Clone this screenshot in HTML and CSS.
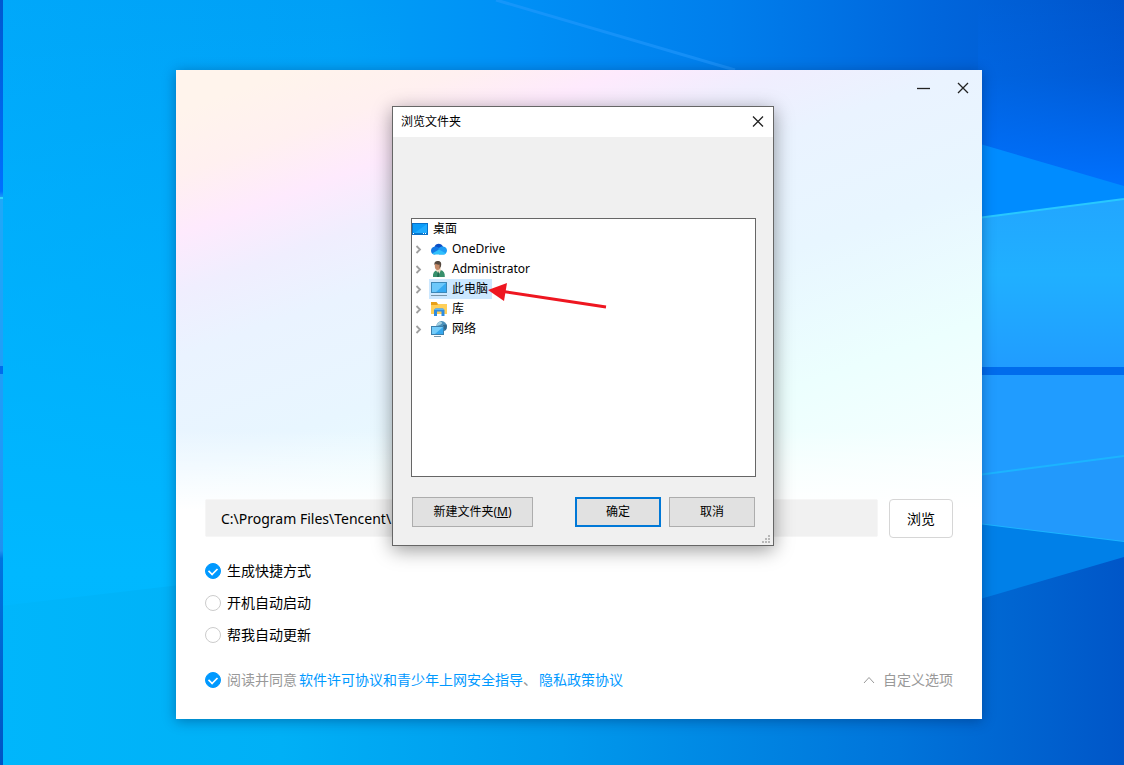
FILE: index.html
```html
<!DOCTYPE html>
<html lang="zh-CN">
<head>
    <meta charset="UTF-8">
    <title>安装向导</title>
    <link rel="stylesheet" href="styles.css">
</head>
<body>

<div class="desktop">
    <svg class="wallpaper" viewBox="0 0 1124 765" preserveAspectRatio="none" aria-hidden="true">
        <defs>
            <linearGradient id="sky" x1="0" y1="0" x2="1" y2="0">
                <stop offset="0" stop-color="#00a8fa"/>
                <stop offset="0.3" stop-color="#009ff6"/>
                <stop offset="0.46" stop-color="#0090f6"/>
                <stop offset="0.65" stop-color="#007eec"/>
                <stop offset="0.83" stop-color="#0066dc"/>
                <stop offset="1" stop-color="#0054cc"/>
            </linearGradient>
            <linearGradient id="glow" x1="0" y1="0" x2="0" y2="1">
                <stop offset="0" stop-color="#00b8ff" stop-opacity="0"/>
                <stop offset="0.75" stop-color="#00b8ff"/>
                <stop offset="1" stop-color="#00b4fa"/>
            </linearGradient>
            <linearGradient id="floor" x1="0" y1="0" x2="1" y2="0">
                <stop offset="0" stop-color="#00b6fb"/>
                <stop offset="0.25" stop-color="#00b0f6"/>
                <stop offset="0.5" stop-color="#0099ec"/>
                <stop offset="0.8" stop-color="#0074da"/>
                <stop offset="1" stop-color="#0056c8"/>
            </linearGradient>
            <linearGradient id="night" x1="0" y1="0" x2="0" y2="1">
                <stop offset="0" stop-color="#0070ff" stop-opacity="0"/>
                <stop offset="0.4" stop-color="#0070ff" stop-opacity="0.2"/>
                <stop offset="1" stop-color="#0072ff"/>
            </linearGradient>
            <linearGradient id="pane" x1="0" y1="0" x2="0" y2="1">
                <stop offset="0" stop-color="#22a6ff"/>
                <stop offset="0.45" stop-color="#20b0ff"/>
                <stop offset="1" stop-color="#209cff"/>
            </linearGradient>
            <linearGradient id="edge" x1="0" y1="0" x2="0" y2="1">
                <stop offset="0" stop-color="#0058d0"/>
                <stop offset="0.25" stop-color="#0070ff"/>
                <stop offset="0.26" stop-color="#20a8f8"/>
                <stop offset="0.6" stop-color="#2098f8"/>
                <stop offset="0.72" stop-color="#2090f0"/>
                <stop offset="0.73" stop-color="#0074e0"/>
                <stop offset="1" stop-color="#0054c4"/>
            </linearGradient>
        </defs>
        <rect width="1124" height="765" fill="url(#sky)"/>
        <rect width="400" height="765" fill="url(#glow)"/>
        <path d="M0 606L240 578L982 560H1124V765H0Z" fill="url(#floor)"/>
        <path d="M200 0H400V70H200Z" fill="url(#sky)" opacity="0"/>
        <rect x="978" width="146" height="190" fill="url(#night)"/>
        <path d="M496 0L735 70" stroke="#2a9cff" stroke-width="3" opacity="0.5"/>
        <path d="M970 141L1124 186V199L970 219Z" fill="#008cff"/>
        <path d="M970 219L1124 199V367H970Z" fill="url(#pane)"/>
        <path d="M970 219L1124 199" stroke="#28c8ff" stroke-width="2"/>
        <path d="M970 367H1124V375H970Z" fill="#006cec"/>
        <path d="M970 375H1124V456L970 476Z" fill="#209cff"/>
        <path d="M970 476L1124 456V542L970 523Z" fill="#2299fc"/>
        <path d="M970 476L1124 456M970 523L1124 542" stroke="#1cb4ff" stroke-width="2"/>
        <path d="M970 523L1124 542V557L970 602Z" fill="#0080e8"/>
        <rect width="3" height="765" fill="url(#edge)"/>
        <path d="M0 198H3" stroke="#30d4ff" stroke-width="2"/>
        <path d="M0 370H3" stroke="#006cec" stroke-width="8"/>
    </svg>

    <main class="installer">
        <header class="installer-bar">
            <button class="win-btn" type="button" aria-label="最小化">
                <svg width="14" height="14" viewBox="0 0 14 14"><path d="M1 7.5H14"/></svg>
            </button>
            <button class="win-btn" type="button" aria-label="关闭">
                <svg width="14" height="14" viewBox="0 0 14 14"><path d="M2 2L12 12M12 2L2 12"/></svg>
            </button>
        </header>

        <form class="setup">
            <div class="path-row">
                <input class="path-input" type="text" value="C:\Program Files\Tencent\" aria-label="安装路径">
                <button class="browse-btn" type="button">浏览</button>
            </div>

            <div class="options">
                <label class="option"><input type="checkbox" checked>生成快捷方式</label>
                <label class="option"><input type="checkbox">开机自动启动</label>
                <label class="option"><input type="checkbox">帮我自动更新</label>
            </div>

            <div class="footer">
                <div class="agreement">
                    <label class="option muted"><input type="checkbox" checked>阅读并同意</label>
                    <a href="#">软件许可协议和青少年上网安全指导</a><span class="comma">、</span>
                    <a href="#">隐私政策协议</a>
                </div>
                <button class="custom-btn" type="button">
                    <svg width="12" height="8" viewBox="0 0 12 8"><path d="M1 7L6 1.5L11 7"/></svg>
                    自定义选项
                </button>
            </div>
        </form>
    </main>

    <section class="dialog" role="dialog" aria-labelledby="dialogTitle">
        <header class="dialog-bar">
            <h1 id="dialogTitle">浏览文件夹</h1>
            <button class="dialog-close" type="button" aria-label="关闭">
                <svg width="12" height="12" viewBox="0 0 12 12"><path d="M1 0.5L11 10.5M11 0.5L1 10.5"/></svg>
            </button>
        </header>

        <div class="dialog-body">
            <div class="tree">
                <div class="node root">
                    <svg class="icon" width="16" height="16" viewBox="0 0 16 16">
                        <rect x="0.5" y="2.5" width="15" height="11" fill="#0c9cf8" stroke="#0870c8"/>
                        <path d="M1 13L15 3V13Z" fill="#20acff"/>
                        <path d="M1 12.5H15" stroke="#0a78cc"/>
                        <path d="M1 12.5H2M11 12.5H12M13 12.5H14" stroke="#fff"/>
                    </svg>
                    <span class="name">桌面</span>
                </div>
                <ul>
                    <li class="node">
                        <button class="expand" type="button" aria-label="展开"><svg width="7" height="9" viewBox="0 0 7 9"><path d="M1.5 1L5 4.5L1.5 8"/></svg></button>
                        <span class="item">
                            <svg class="icon" width="16" height="16" viewBox="0 0 16 16">
                                <path d="M4 9C2.6 5.5 4.6 2.7 7.6 2.7C9.6 2.7 11.2 3.8 12 5.6L9 10Z" fill="#0c4fc4"/>
                                <path d="M3.2 5.8C5.4 5.2 7 6 8.5 7.5L10 9L4 13.5H3.5C1.5 13.5 0 12 0 9.8C0 7.6 1.4 6.1 3.2 5.8Z" fill="#1478e4"/>
                                <path d="M7.5 7.5C9 5.6 11 5.2 12.2 5.5C14.5 5.8 16 7.5 16 9.6C16 12 14.3 13.5 12.3 13.5H8Z" fill="#1e9cf4"/>
                                <path d="M1.2 12.6L8 8.6L15 12.4C14.3 13.2 13.4 13.5 12.3 13.5H3.5C2.6 13.5 1.8 13.2 1.2 12.6Z" fill="#30c0fc"/>
                            </svg>
                            <span class="name">OneDrive</span>
                        </span>
                    </li>
                    <li class="node">
                        <button class="expand" type="button" aria-label="展开"><svg width="7" height="9" viewBox="0 0 7 9"><path d="M1.5 1L5 4.5L1.5 8"/></svg></button>
                        <span class="item">
                            <svg class="icon" width="16" height="16" viewBox="0 0 16 16">
                                <path d="M2 16C1.6 12.2 3 9.8 6 9.2L9.5 9C12.6 9.8 14 12 13.8 16Z" fill="#37906c"/>
                                <path d="M4.8 9.5L8.2 13L9.8 9.2V7H5.5Z" fill="#f0ddc8"/>
                                <path d="M7 10L8.2 12.6L8 16H6Z" fill="#226b50"/>
                                <ellipse cx="6.6" cy="5" rx="2.8" ry="3.9" fill="#c48a68"/>
                                <path d="M3.6 4.2C2.8 1.4 4.8 0 7 0.1C9.8 0 11 2.4 9.8 5.8L8.6 7.6V3.6C7 3.8 5 3.4 4.4 2.8Z" fill="#55493f"/>
                            </svg>
                            <span class="name">Administrator</span>
                        </span>
                    </li>
                    <li class="node">
                        <button class="expand" type="button" aria-label="展开"><svg width="7" height="9" viewBox="0 0 7 9"><path d="M1.5 1L5 4.5L1.5 8"/></svg></button>
                        <span class="item selected">
                            <svg class="icon" width="16" height="16" viewBox="0 0 16 16">
                                <rect x="0.5" y="1.5" width="15" height="10" fill="#36aaf2" stroke="#3c88b8"/>
                                <path d="M1 2H15L5 11H1Z" fill="#6bc8fb"/>
                                <path d="M0 14.5H16" stroke="#7895a8"/>
                            </svg>
                            <span class="name">此电脑</span>
                        </span>
                    </li>
                    <li class="node">
                        <button class="expand" type="button" aria-label="展开"><svg width="7" height="9" viewBox="0 0 7 9"><path d="M1.5 1L5 4.5L1.5 8"/></svg></button>
                        <span class="item">
                            <svg class="icon" width="16" height="16" viewBox="0 0 16 16">
                                <path d="M0 1H5.5L7 3H15V6H0Z" fill="#e8a018"/>
                                <path d="M0 4H6L7.5 3H16V13H0Z" fill="#ffcf58"/>
                                <path d="M3 15V9L4.5 7.5H12L13.5 9V15H10.5V10.5H6V15Z" fill="#2e8be0"/>
                                <path d="M4.5 7.5H12L13.5 9H3Z" fill="#5cb4f4"/>
                            </svg>
                            <span class="name">库</span>
                        </span>
                    </li>
                    <li class="node">
                        <button class="expand" type="button" aria-label="展开"><svg width="7" height="9" viewBox="0 0 7 9"><path d="M1.5 1L5 4.5L1.5 8"/></svg></button>
                        <span class="item">
                            <svg class="icon" width="16" height="16" viewBox="0 0 16 16">
                                <circle cx="10.6" cy="5.4" r="5.3" fill="#4a90ba"/>
                                <path d="M8 1C10 0.2 11.5 1 11 2.5L9 4L5.6 5C5.8 3 6.7 1.8 8 1Z" fill="#a4cfe0"/>
                                <path d="M12 4L15.6 3.5C16.4 6 15.5 8.5 14 9.5L12.5 7Z" fill="#31688c"/>
                                <rect x="0.5" y="5.5" width="12" height="8" fill="#36a8ee" stroke="#3c80ac"/>
                                <path d="M1 6H12L4 13H1Z" fill="#74ccfa"/>
                                <path d="M3 15.5H10" stroke="#7897aa"/>
                            </svg>
                            <span class="name">网络</span>
                        </span>
                    </li>
                </ul>
            </div>

            <div class="actions">
                <button class="btn btn-new" type="button">新建文件夹(<u>M</u>)</button>
                <button class="btn btn-ok" type="button">确定</button>
                <button class="btn" type="button">取消</button>
            </div>
        </div>

        <svg class="grip" width="8" height="8" viewBox="0 0 8 8" aria-hidden="true">
            <path d="M6 0h2v2h-2zM3 3h2v2h-2zM6 3h2v2h-2zM0 6h2v2h-2zM3 6h2v2h-2zM6 6h2v2h-2z" fill="#b8b8b8"/>
        </svg>
        <svg class="pointer" width="120" height="30" viewBox="0 0 120 30" aria-hidden="true">
            <path d="M12 8L118 24" stroke="#ee1620" stroke-width="3"/>
            <path d="M0 7L19 0L16 18Z" fill="#ee1620"/>
        </svg>
    </section>
</div>

</body>
</html>
```

FILE: styles.css
```css
:root {
    --blue: #0099ff;
    --muted: #999999;
    --face: #f0f0f0;
    --focus: #0078d7;
    --font: "Noto Sans", "Noto Sans CJK SC", sans-serif;
}

* {
    box-sizing: border-box;
}

body {
    margin: 0;
    font-family: var(--font);
    font-size: 14px;
    line-height: 20px;
    color: #000;
}

button,
input {
    font: inherit;
    color: inherit;
}

button {
    padding: 0;
    border: none;
    background: none;
    cursor: pointer;
}

svg {
    display: block;
    flex: none;
}

.desktop {
    position: relative;
    min-height: 100vh;
    overflow: hidden;
    background: #00a0f5;
}

.wallpaper {
    position: absolute;
    width: 100%;
    height: 100%;
}

/* installer window */
.installer {
    position: absolute;
    top: 70px;
    left: 176px;
    width: 806px;
    background:
        linear-gradient(to bottom, rgba(255, 255, 255, 0) 360px, #fff 440px),
        linear-gradient(160deg, #fff4ec 40px, #fff0f0 100px, #feeafd 155px, #f0eefe 210px, #eaf3ff 270px, #e8f6ff 380px, #ecfffe 510px, #fff 760px);
    box-shadow: 0 2px 12px rgba(0, 30, 80, 0.4);
}

.installer-bar {
    display: flex;
    justify-content: flex-end;
    gap: 16px;
    padding: 6px 7px;
}

.win-btn {
    display: grid;
    place-items: center;
    width: 24px;
    height: 24px;
}

.win-btn svg,
.dialog-close svg {
    fill: none;
    stroke: #222;
    stroke-width: 1.3;
}

.setup {
    padding: 393px 29px 29px;
}

.path-row {
    display: flex;
    gap: 11px;
}

.path-input {
    flex: 1;
    min-width: 0;
    height: 38px;
    padding: 0 15px;
    border: 1px solid #f6f6f6;
    border-radius: 2px;
    background: #f1f1f1;
}

.browse-btn {
    width: 64px;
    height: 39px;
    border: 1px solid #d6d6d6;
    border-radius: 4px;
    background: #fff;
}

.options {
    display: grid;
    gap: 12px;
    justify-items: start;
    padding-top: 23px;
}

.option {
    display: flex;
    align-items: center;
    gap: 6px;
}

.option input {
    appearance: none;
    width: 16px;
    height: 16px;
    margin: 0;
    border: 1px solid #ccc;
    border-radius: 50%;
    background: #fff;
}

.option input:checked {
    display: grid;
    place-items: center;
    border-color: var(--blue);
    background: var(--blue);
}

.option input:checked::after {
    content: "";
    width: 8px;
    height: 5px;
    border: solid #fff;
    border-width: 0 0 2px 2px;
    transform: translateY(-1px) rotate(-45deg) scale(0.85);
}

.muted {
    color: var(--muted);
}

.footer {
    display: flex;
    justify-content: space-between;
    align-items: center;
    padding-top: 25px;
}

.agreement {
    display: flex;
    align-items: center;
    gap: 2px;
}

.agreement a {
    color: var(--blue);
    text-decoration: none;
}

.agreement .comma {
    margin-left: -2px;
    color: var(--muted);
}

.custom-btn {
    display: flex;
    align-items: center;
    gap: 8px;
    color: var(--muted);
}

.custom-btn svg {
    fill: none;
    stroke: var(--muted);
}

/* folder picker */
.dialog {
    position: absolute;
    top: 106px;
    left: 392px;
    width: 382px;
    border: 1px solid #666;
    background: var(--face);
    box-shadow: 0 4px 18px rgba(0, 0, 0, 0.4);
    font-size: 12px;
}

.dialog-bar {
    display: flex;
    justify-content: space-between;
    align-items: center;
    height: 30px;
    padding: 0 9px 0 8px;
    background: #fff;
}

.dialog-bar h1 {
    margin: 0;
    font-size: 12px;
    font-weight: normal;
}

.dialog-body {
    padding: 81px 17px 18px 18px;
}

.tree {
    height: 259px;
    border: 1px solid #666;
    background: #fff;
}

.tree ul {
    margin: 0;
    padding: 0;
    list-style: none;
}

.node {
    display: flex;
    align-items: center;
    height: 20px;
}

.root {
    gap: 5px;
}

.expand {
    display: grid;
    place-items: center;
    width: 13px;
    height: 20px;
    margin-right: 4px;
}

.expand svg {
    fill: none;
    stroke: #a0a0a0;
    stroke-width: 1.8;
}

.item {
    display: flex;
    align-items: center;
    gap: 5px;
    height: 20px;
    padding: 0 4px 0 2px;
}

.selected {
    background: #cce8ff;
}

.actions {
    display: flex;
    gap: 8px;
    padding: 20px 1px 0;
}

.btn {
    width: 86px;
    height: 30px;
    border: 1px solid #adadad;
    background: #e1e1e1;
}

.btn-new {
    width: 121px;
    margin-right: auto;
}

.btn-ok {
    border: 2px solid var(--focus);
}

.grip {
    position: absolute;
    right: 3px;
    bottom: 2px;
}

/* red arrow laid over the tree */
.pointer {
    position: absolute;
    top: 176px;
    left: 95px;
}
```
